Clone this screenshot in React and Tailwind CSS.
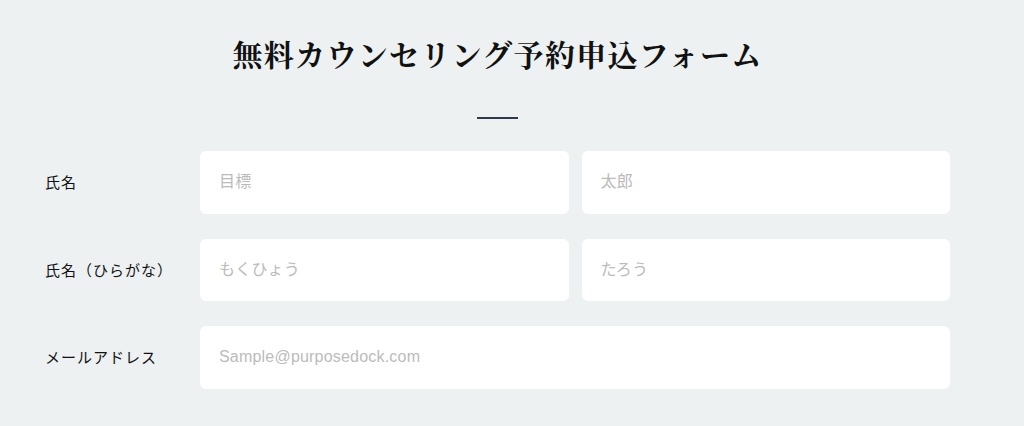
export default function App() {
  const rows = [
    { label: "氏名", fields: ["目標", "太郎"] },
    { label: "氏名（ひらがな）", fields: ["もくひょう", "たろう"] },
    { label: "メールアドレス", fields: ["Sample@purposedock.com"] },
  ];

  return (
    <div
      className="min-h-[426px] w-full bg-[#edf1f2] pt-[32px]"
      style={{ fontFamily: '"Noto Sans", "Noto Sans CJK JP", sans-serif' }}
    >
      <div className="ml-[45px] w-[905px]">
        <h1
          className="text-center text-[30px] font-bold leading-[42px] tracking-[1.3px] text-[#111]"
          style={{ fontFamily: '"Noto Serif CJK JP", "Liberation Serif", "Noto Sans CJK JP", serif' }}
        >
          無料カウンセリング予約申込フォーム
        </h1>
        <div className="mx-auto mt-[43px] h-[2px] w-[41px] bg-[#2d3a4b]" />

        <div className="mt-[32px] flex flex-col gap-[25px]">
          {rows.map((row) => (
            <div key={row.label} className="flex items-center">
              <label className="w-[155px] shrink-0 text-[15px] tracking-[1px] text-[#111]">
                {row.label}
              </label>
              <div className="flex flex-1 gap-[13px]">
                {row.fields.map((f) => (
                  <input
                    key={f}
                    placeholder={f}
                    className="h-[62.5px] min-w-0 flex-1 rounded-[6px] bg-white px-[19px] text-[16px] tracking-[0.2px] text-[#333] outline-none placeholder:text-[#bbbbbb]"
                    style={{ fontFamily: '"Liberation Sans", "Noto Sans CJK JP", sans-serif' }}
                  />
                ))}
              </div>
            </div>
          ))}
        </div>
      </div>
    </div>
  );
}
